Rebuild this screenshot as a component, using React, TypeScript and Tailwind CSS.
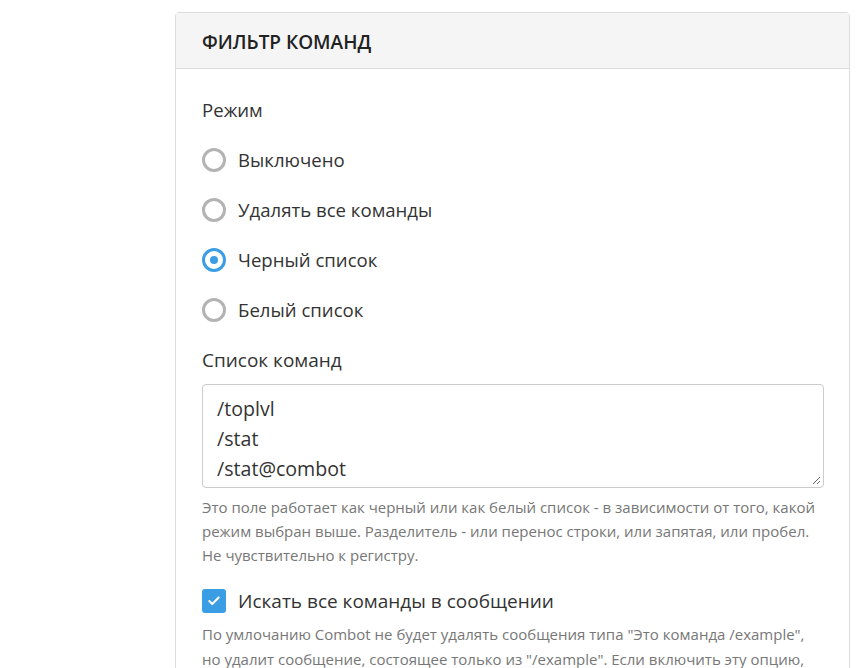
import { Check } from "lucide-react";

const modes = ["Выключено", "Удалять все команды", "Черный список", "Белый список"];

function Radio({ label, checked }: { label: string; checked?: boolean }) {
  return (
    <label className="flex h-[50px] items-center gap-3">
      <span
        className={`flex h-6 w-6 items-center justify-center rounded-full border-[3px] ${
          checked ? "border-[#3b9ee4]" : "border-[#b3b3b3]"
        }`}
      >
        {checked && <span className="h-2 w-2 rounded-full bg-[#3b9ee4]" />}
      </span>
      <span className="text-[18.6px] text-[#333]">{label}</span>
    </label>
  );
}

export default function App() {
  return (
    <div className="h-[668px] w-[865px] overflow-hidden bg-white font-['Open_Sans',sans-serif] text-[#333]">
      <div className="ml-[175px] mt-3 w-[675px] rounded border border-[#dcdcdc]">
        {/* Header */}
        <div className="flex h-[56px] items-center border-b border-[#dcdcdc] bg-[#f5f5f5] px-[26px] pt-1">
          <h3 className="text-[19px] font-semibold uppercase text-[#222]">Фильтр команд</h3>
        </div>

        {/* Body */}
        <div className="px-[26px] pt-[26px]">
          <div className="text-[18.6px] leading-[30px]">Режим</div>
          <div className="mt-[10px]">
            {modes.map((m, i) => (
              <Radio key={m} label={m} checked={i === 2} />
            ))}
          </div>

          <div className="mt-[10px] text-[19px] leading-[30px]">Список команд</div>
          <div className="relative mt-[9px] mr-[-1px] h-[104px] rounded border border-[#ccc] px-[14px] py-[9px] text-[19.6px] leading-[30px]">
            <div>/toplvl</div>
            <div>/stat</div>
            <div>/stat@combot</div>
            <svg className="absolute bottom-[2px] right-[2px] h-3 w-3 text-[#666]" viewBox="0 0 12 12">
              <path d="M11 4L4 11M11 8L8 11" stroke="currentColor" strokeWidth="1" fill="none" />
            </svg>
          </div>
          <p className="mt-[7px] text-[15px] leading-6 text-[#777]">
            Это поле работает как черный или как белый список - в зависимости от того, какой режим выбран
            выше. Разделитель - или перенос строки, или запятая, или пробел. Не чувствительно к регистру.
          </p>

          <label className="mt-[20px] flex items-center gap-3">
            <span className="flex h-6 w-6 items-center justify-center rounded-[3px] bg-[#3b9ee4]">
              <Check className="h-[14px] w-[14px] text-white" strokeWidth={3.5} />
            </span>
            <span className="text-[19px] text-[#333]">Искать все команды в сообщении</span>
          </label>
          <p className="mt-[6px] text-[15px] leading-[25px] text-[#777]">
            По умлочанию Combot не будет удалять сообщения типа "Это команда /example", но удалит сообщение,
            состоящее только из "/example". Если включить эту опцию, бот будет удалять все сообщения с командами.
          </p>
        </div>
      </div>
    </div>
  );
}
